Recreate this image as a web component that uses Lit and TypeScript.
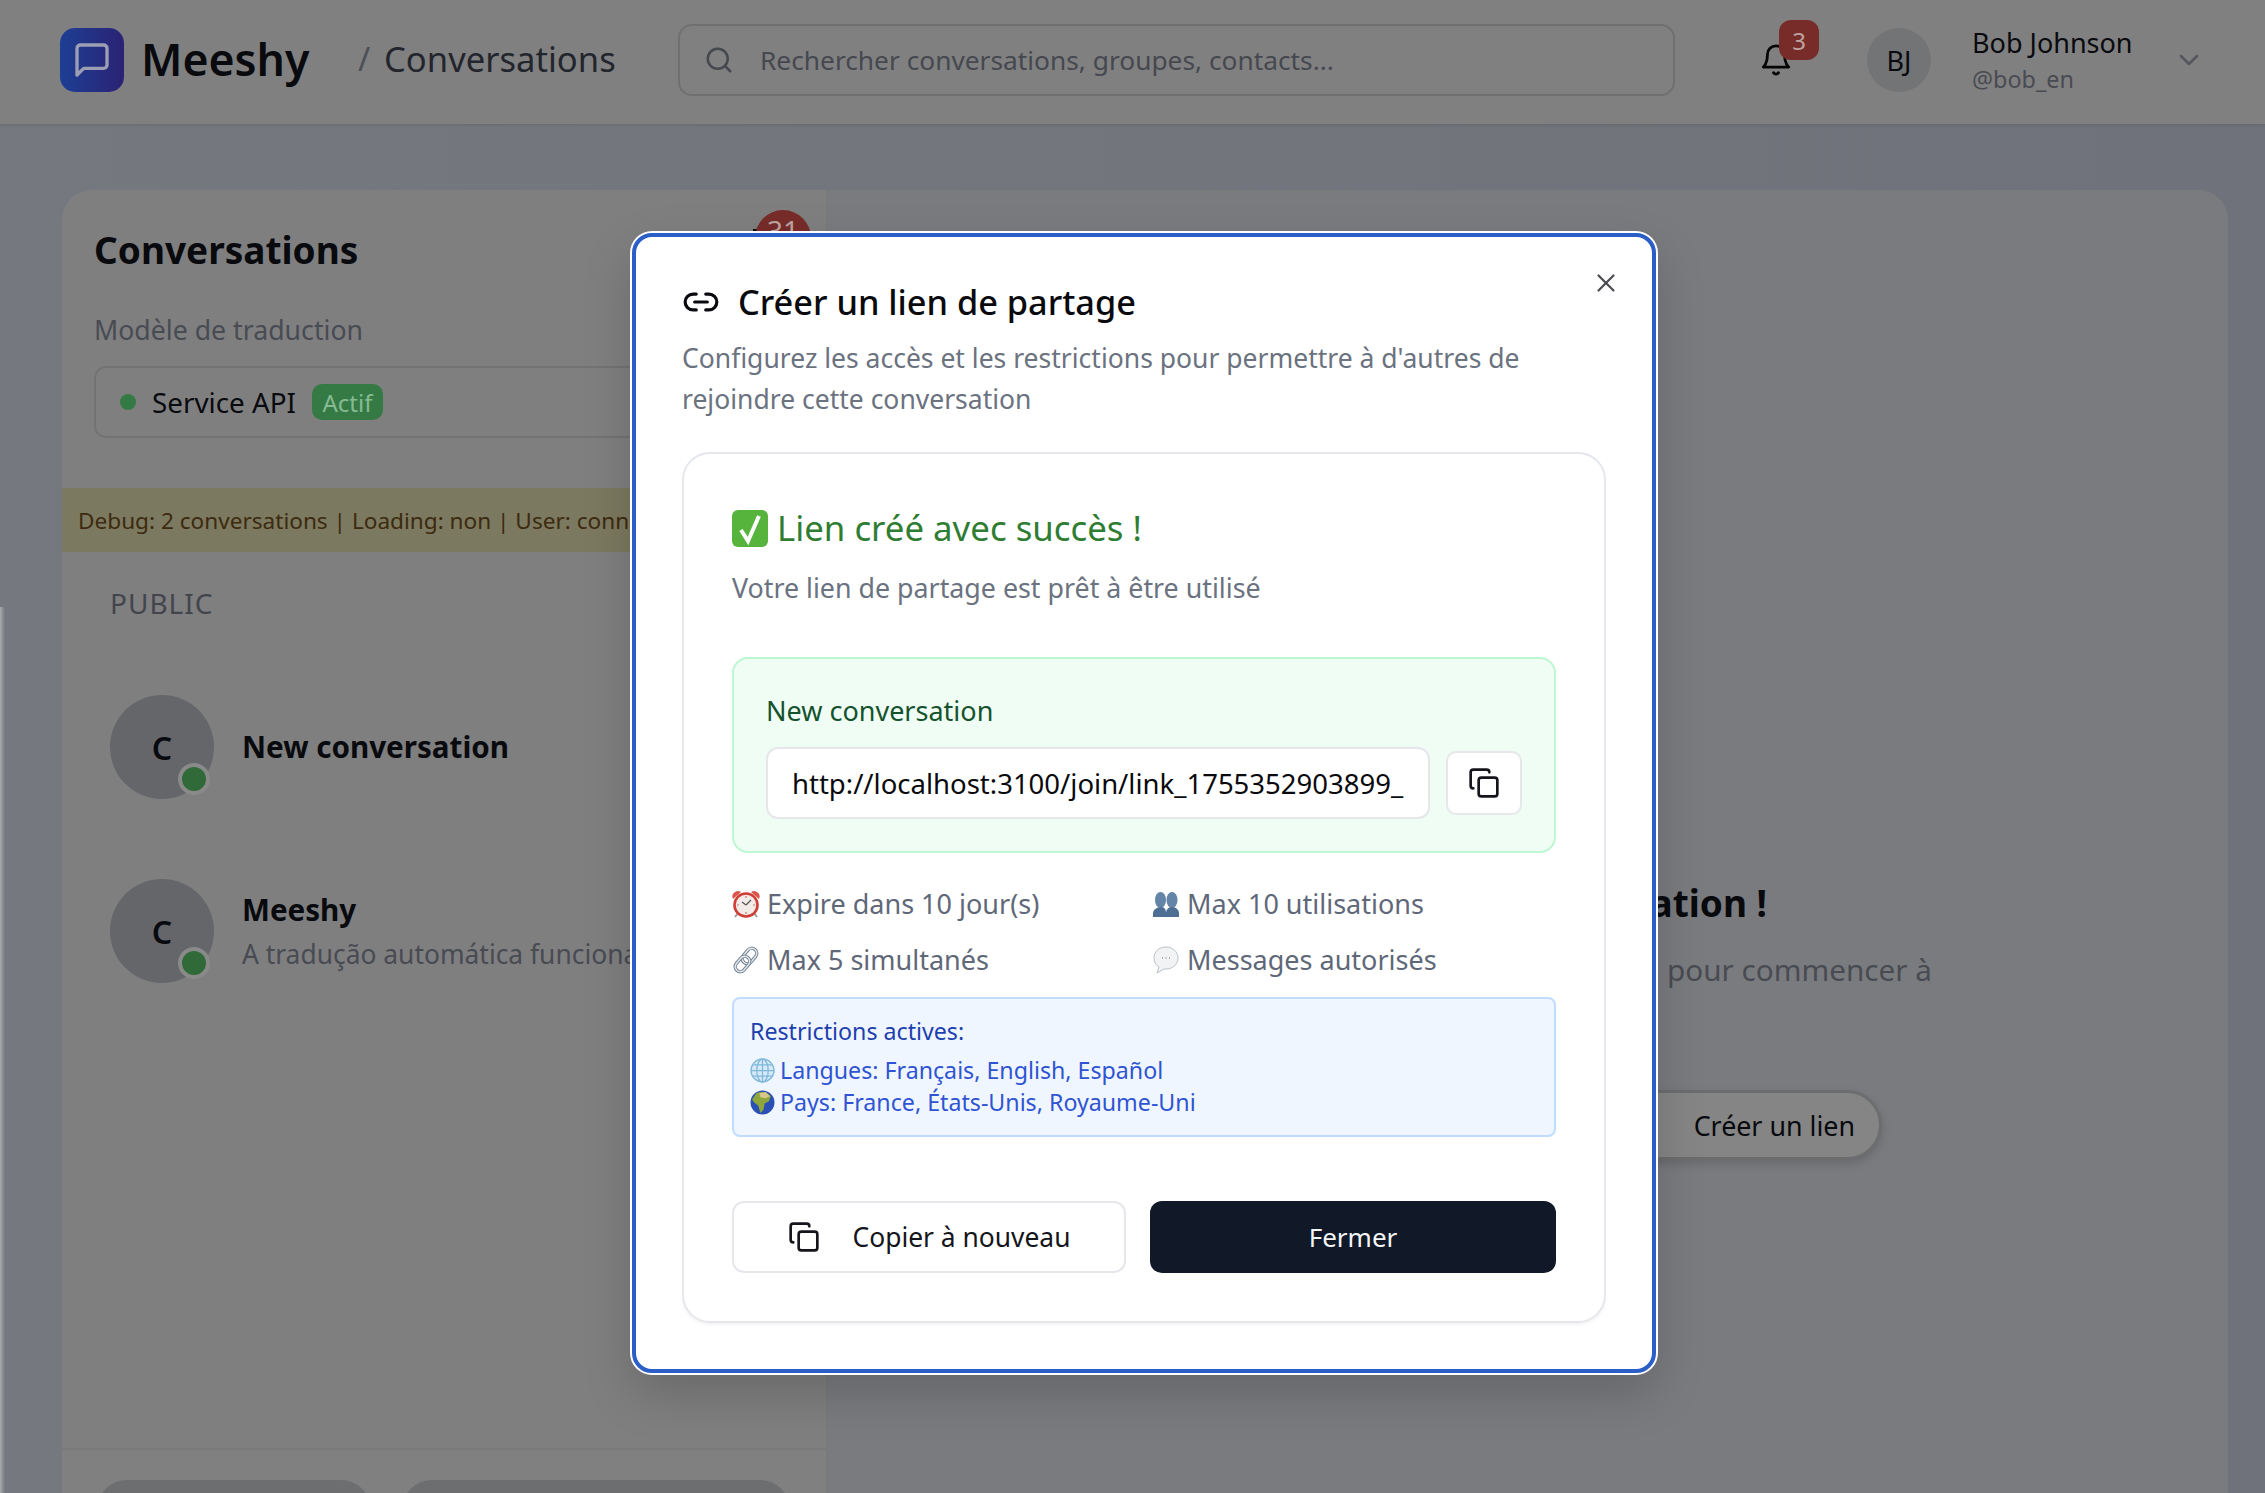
import { LitElement, css, html, svg } from "lit";
import { customElement } from "lit/decorators.js";

const icon = (size: number, body: unknown, stroke = "currentColor", width = 2) => html`
  <svg width=${size} height=${size} viewBox="0 0 24 24" fill="none" stroke=${stroke}
    stroke-width=${width} stroke-linecap="round" stroke-linejoin="round">${body}</svg>
`;

const copyIcon = (size: number) =>
  icon(size, svg`<rect x="8" y="8" width="14" height="14" rx="2"></rect>
    <path d="M4 16c-1.1 0-2-.9-2-2V4c0-1.1.9-2 2-2h10c1.1 0 2 .9 2 2"></path>`);

// the reference uses colour emoji, no emoji font here so they are small drawings
const emojiCheck = html`<svg class="emoji-big" viewBox="0 0 36 37">
  <rect x="0" y="0" width="36" height="37" rx="6" fill="#56b33c"></rect>
  <path d="M9 20l7 11L27 6" fill="none" stroke="#fff" stroke-width="4"></path>
</svg>`;
const emojiClock = html`<svg class="emoji" viewBox="0 0 28 28">
  <path d="M1 9a5.500 5.500 0 0 1 8-7zM27 9a5.500 5.500 0 0 0-8-7z" fill="#d9534a"></path>
  <path d="M6 23l-3 4M22 23l3 4" stroke="#9a9a9a" stroke-width="2"></path>
  <circle cx="14" cy="15" r="11.500" fill="#f3ebe8" stroke="#cf3f36" stroke-width="2.600"></circle>
  <path d="M14 15l-4-3M14 15l5-5" fill="none" stroke="#555" stroke-width="1.200"></path>
  <path d="M14 6v2M14 22v2M5 15h2M21 15h2" stroke="#c9786f" stroke-width="1.200"></path>
</svg>`;
const emojiBusts = html`<svg class="emoji" viewBox="0 0 28 28">
  <ellipse cx="8.500" cy="10" rx="5.500" ry="8" fill="#6484a8"></ellipse>
  <path d="M1 27v-4c0-3 4-6 8-6s5 3 5 6v4z" fill="#4f6e94"></path>
  <ellipse cx="20" cy="10" rx="5.500" ry="8" fill="#6484a8"></ellipse>
  <path d="M14 27v-4c0-3 2-6 6-6s7 3 7 6v4z" fill="#4f6e94"></path>
</svg>`;
const emojiLink = html`<svg class="emoji" viewBox="0 0 28 28">
  <g fill="none">
    <rect x="12.500" y="1.500" width="10" height="17" rx="5" transform="rotate(40 17.500 10)" stroke="#6f7d8a" stroke-width="3.400"></rect>
    <rect x="12.500" y="1.500" width="10" height="17" rx="5" transform="rotate(40 17.500 10)" stroke="#dfe6ec" stroke-width="1.600"></rect>
    <rect x="5.500" y="9.500" width="10" height="17" rx="5" transform="rotate(40 10.500 18)" stroke="#6f7d8a" stroke-width="3.400"></rect>
    <rect x="5.500" y="9.500" width="10" height="17" rx="5" transform="rotate(40 10.500 18)" stroke="#dfe6ec" stroke-width="1.600"></rect>
  </g>
</svg>`;
const emojiBubble = html`<svg class="emoji" viewBox="0 0 28 28">
  <path d="M14 1C7 1 2 5.500 2 12c0 4 2 7 5 9l-2 6 7-4h2c7 0 12-5 12-11S21 1 14 1z" fill="#f1f3f4" stroke="#bcc2c7"></path>
  <path d="M10 12h.6M13.700 12h.6M17.400 12h.6" stroke="#5b6470" stroke-width="1.600"></path>
</svg>`;
const emojiGlobe = html`<svg class="emoji-small" viewBox="0 0 24 24">
  <circle cx="12" cy="12" r="11" fill="#d5e9f6" stroke="#7fb8da" stroke-width="1.400"></circle>
  <path d="M12 1v22M1 12h22M3 6.500h18M3 17.500h18" stroke="#7fb8da" stroke-width="1.200" fill="none"></path>
  <ellipse cx="12" cy="12" rx="5.500" ry="11" fill="none" stroke="#7fb8da" stroke-width="1.200"></ellipse>
</svg>`;
const emojiEarth = html`<svg class="emoji-small" viewBox="0 0 24 24">
  <circle cx="12" cy="12" r="11.500" fill="#2a4fb5"></circle>
  <path d="M6 3c5-2 11-1 14 3l-2 5-4 2-1 6-3 3-2-7-4-3-2-3z" fill="#8ea63c"></path>
  <path d="M9 3l6-1 4 4-4 2-5-1z" fill="#d8c78a"></path>
</svg>`;

@customElement("app-root")
export class AppRoot extends LitElement {
  static styles = css`
    :host {
      display: block;
      position: relative;
      width: 2265px;
      height: 1493px;
      overflow: hidden;
      background: linear-gradient(90deg, #75787f, #70727b);
      font-family: "Noto Sans", "Open Sans", sans-serif;
      color: #090a0e;
    }
    * { box-sizing: border-box; }
    svg { display: block; flex: none; }

    .edge {
      position: absolute;
      left: 0;
      top: 607px;
      bottom: 0;
      width: 5px;
      background: linear-gradient(90deg, #a9aaac, #75787f);
    }

    .header {
      height: 124px;
      background: #808080;
      display: flex;
      align-items: center;
      padding: 0 46px 4px 60px;
      box-shadow: 0 1px 3px rgba(0, 0, 0, 0.12);
    }
    .logo {
      width: 64px;
      height: 64px;
      border-radius: 15px;
      background: linear-gradient(90deg, #1d3f94, #2b2274);
      color: #9c9fb4;
      display: flex;
      align-items: center;
      justify-content: center;
    }
    .brand { margin: 0 0 3px 17px; font-size: 44.6px; font-weight: 600; width: 217px; white-space: nowrap; }
    .slash { color: #4d4f57; font-size: 33px; width: 26px; margin-bottom: 3px; }
    .crumb { color: #23252d; font-size: 34.6px; width: 294px; white-space: nowrap; margin-bottom: 3px; }
    .search {
      width: 997px;
      height: 72px;
      border: 2px solid #6f7072;
      border-radius: 14px;
      display: flex;
      align-items: center;
      padding-left: 24px;
      gap: 26px;
      color: #46484f;
      font-size: 26.3px;
      white-space: nowrap;
    }
    .bell { position: relative; margin-left: 84px; width: 40px; color: #050505; }
    .bell-badge {
      position: absolute;
      left: 20px;
      top: -23px;
      width: 40px;
      height: 40px;
      border-radius: 12px;
      background: #772c29;
      color: #bda3a0;
      font-size: 24px;
      display: flex;
      align-items: center;
      justify-content: center;
    }
    .avatar-small {
      margin-left: 68px;
      width: 64px;
      height: 64px;
      border-radius: 50%;
      background: #737476;
      display: flex;
      align-items: center;
      justify-content: center;
      font-size: 27px;
    }
    .user { margin: 2px 0 0 41px; width: 201px; }
    .user-name { font-size: 27px; line-height: 36px; white-space: nowrap; }
    .user-handle { font-size: 23.4px; line-height: 36px; color: #494b52; }
    .chevron { color: #55575d; }

    .main { display: flex; padding: 66px 37px 0 62px; height: 1369px; }
    .panel {
      flex: 1;
      display: flex;
      background: #7f7f80;
      border-radius: 30px 30px 0 0;
      overflow: hidden;
    }
    .left {
      width: 766px;
      flex: none;
      border-right: 2px solid #797a7b;
      display: flex;
      flex-direction: column;
    }
    .left-top { padding: 32px 32px 0; position: relative; height: 298px; }
    .left-title { font-size: 37px; font-weight: 700; line-height: 56px; white-space: nowrap; }
    .unread {
      position: absolute;
      left: 693px;
      top: 20px;
      width: 56px;
      height: 56px;
      border-radius: 50%;
      background: #772c29;
      color: #bda3a0;
      font-size: 28px;
      text-align: center;
      line-height: 40px;
    }
    .unread-tick { position: absolute; left: 691px; top: 39px; width: 20px; height: 2px; background: #0a0a0a; }
    .model-label { margin-top: 32px; font-size: 26.7px; line-height: 40px; color: #494b52; }
    .model {
      margin-top: 16px;
      height: 72px;
      border: 2px solid #727375;
      border-radius: 12px;
      display: flex;
      align-items: center;
      padding-left: 24px;
      font-size: 27.800px;
    }
    .dot { width: 16px; height: 16px; border-radius: 50%; background: #347a45; margin-right: 16px; }
    .active {
      margin-left: 16px;
      width: 71px;
      height: 36px;
      border-radius: 10px;
      background: #357a44;
      color: #86ba93;
      font-size: 24px;
      display: flex;
      align-items: center;
      justify-content: center;
    }
    .debug {
      height: 64px;
      background: #7b795f;
      color: #3d2a10;
      font-size: 22.6px;
      padding-left: 16px;
      display: flex;
      align-items: center;
      white-space: nowrap;
    }
    .group { padding: 31px 48px 0; font-size: 28px; line-height: 40px; color: #43454d; letter-spacing: 1px; }
    .rows { padding: 72px 48px 0; display: flex; flex-direction: column; gap: 80px; flex: 1; }
    .row { display: flex; align-items: center; gap: 28px; height: 104px; white-space: nowrap; }
    .avatar {
      position: relative;
      width: 104px;
      height: 104px;
      border-radius: 50%;
      background: #65666a;
      display: flex;
      align-items: center;
      justify-content: center;
      font-size: 32px;
      font-weight: 600;
      flex: none;
    }
    .status {
      position: absolute;
      right: 4px;
      bottom: 4px;
      width: 32px;
      height: 32px;
      border-radius: 50%;
      background: #2f6a38;
      border: 4px solid #8a8a8a;
    }
    .row-title { font-size: 29.6px; font-weight: 700; line-height: 44px; }
    .row-sub { margin-top: 2px; font-size: 26.4px; line-height: 40px; color: #494b52; }
    .left-bottom {
      height: 45px;
      background: #808080;
      border-top: 2px solid #797a7b;
      padding: 30px 35px 0;
      display: flex;
      gap: 31px;
    }
    .pill { height: 60px; border-radius: 30px; background: #6d6e70; flex: none; }

    .right { flex: 1; position: relative; background: #7a7b7f; }
    .welcome {
      position: absolute;
      right: 461px;
      top: 683px;
      font-size: 37px;
      font-weight: 700;
      line-height: 60px;
      white-space: nowrap;
    }
    .welcome-sub {
      position: absolute;
      right: 296px;
      top: 758px;
      font-size: 29.7px;
      line-height: 44px;
      color: #494b52;
      white-space: nowrap;
    }
    .create-link {
      position: absolute;
      right: 346px;
      top: 900px;
      width: 500px;
      height: 70px;
      border-radius: 35px;
      background: #858585;
      border: 3px solid #6c6d6f;
      box-shadow: 0 4px 10px rgba(0, 0, 0, 0.15);
      display: flex;
      align-items: center;
      justify-content: flex-end;
      padding-right: 24px;
      font-size: 26.8px;
      white-space: nowrap;
    }

    .modal {
      position: absolute;
      left: 632px;
      top: 233px;
      width: 1024px;
      height: 1140px;
      background: #fff;
      border: 4px solid #2b5fc7;
      border-radius: 20px;
      box-shadow: 0 0 0 2px #fff, 0 20px 50px rgba(0, 0, 0, 0.18);
      padding: 39px 46px 0;
    }
    .close { position: absolute; right: 31px; top: 31px; color: #4b4d53; }
    .modal-title {
      display: flex;
      align-items: center;
      gap: 18px;
      font-size: 34.3px;
      line-height: 51px;
      font-weight: 500;
      white-space: nowrap;
    }
    .modal-desc { margin-top: 11px; font-size: 26.5px; line-height: 40.500px; color: #6b7280; width: 900px; }
    .card {
      margin-top: 33px;
      height: 871px;
      border: 2px solid #e5e7eb;
      border-radius: 28px;
      padding: 48px 48px 0;
      box-shadow: 0 2px 3px rgba(0, 0, 0, 0.05);
    }
    .success {
      display: flex;
      align-items: center;
      gap: 9px;
      font-size: 34.8px;
      line-height: 52px;
      color: #2e7d32;
      white-space: nowrap;
    }
    .emoji-big { width: 36px; height: 37px; }
    .success-sub { margin-top: 12px; font-size: 26.8px; line-height: 44px; color: #6b7280; }
    .green {
      margin-top: 47px;
      height: 196px;
      background: #f0fdf4;
      border: 2px solid #bbf7d0;
      border-radius: 16px;
      padding: 32px 32px 0;
    }
    .green-label { font-size: 27px; line-height: 40px; color: #14532d; }
    .url-row { display: flex; align-items: center; gap: 16px; margin-top: 16px; }
    .url {
      width: 664px;
      height: 72px;
      background: #fff;
      border: 2px solid #e5e7eb;
      border-radius: 12px;
      padding: 0 24px;
      display: flex;
      align-items: center;
      font-size: 27.5px;
      white-space: nowrap;
      overflow: hidden;
    }
    .url-copy {
      width: 76px;
      height: 64px;
      background: #fff;
      border: 2px solid #e5e7eb;
      border-radius: 10px;
      display: flex;
      align-items: center;
      justify-content: center;
      color: #14161c;
    }
    .info {
      margin-top: 31px;
      display: grid;
      grid-template-columns: 420px 1fr;
      row-gap: 16px;
      color: #5f6878;
      font-size: 27px;
      line-height: 40px;
    }
    .info-item { display: flex; align-items: center; gap: 7px; white-space: nowrap; }
    .emoji { width: 28px; height: 28px; }
    .blue {
      margin-top: 17px;
      height: 140px;
      background: #eff6ff;
      border: 2px solid #bfdbfe;
      border-radius: 8px;
      padding: 16px 16px 0;
      font-size: 23.2px;
      color: #2f54d3;
    }
    .blue-title { color: #1e40af; font-size: 23.2px; line-height: 32px; margin-bottom: 7px; }
    .blue-line { display: flex; align-items: center; gap: 5px; line-height: 32px; white-space: nowrap; }
    .emoji-small { width: 25px; height: 25px; }
    .actions { display: flex; gap: 24px; margin-top: 64px; }
    .btn {
      height: 72px;
      border-radius: 12px;
      display: flex;
      align-items: center;
      justify-content: center;
      font-size: 26.4px;
      white-space: nowrap;
    }
    .btn-outline { width: 394px; background: #fff; border: 2px solid #e5e7eb; gap: 33px; color: #14161c; }
    .btn-dark { width: 406px; background: #111827; color: #f4f5f7; font-size: 26px; }
  `;

  render() {
    return html`
      <div class="header">
        <div class="logo">
          ${icon(40, svg`<path d="M21 15a2 2 0 0 1-2 2H7l-4 4V5a2 2 0 0 1 2-2h14a2 2 0 0 1 2 2z"></path>`)}
        </div>
        <div class="brand">Meeshy</div>
        <div class="slash">/</div>
        <div class="crumb">Conversations</div>
        <div class="search">
          ${icon(30, svg`<circle cx="11" cy="11" r="8"></circle><path d="m21 21-4.300-4.300"></path>`)}
          <span>Rechercher conversations, groupes, contacts...</span>
        </div>
        <div class="bell">
          ${icon(34, svg`<path d="M6 8a6 6 0 0 1 12 0c0 7 3 9 3 9H3s3-2 3-9"></path><path d="M10.300 21a1.940 1.940 0 0 0 3.400 0"></path>`)}
          <div class="bell-badge">3</div>
        </div>
        <div class="avatar-small">BJ</div>
        <div class="user">
          <div class="user-name">Bob Johnson</div>
          <div class="user-handle">@bob_en</div>
        </div>
        <div class="chevron">${icon(32, svg`<path d="m6 9 6 6 6-6"></path>`)}</div>
      </div>

      <div class="main">
        <div class="panel">
          <div class="left">
            <div class="left-top">
              <div class="left-title">Conversations</div>
              <div class="unread-tick"></div>
              <div class="unread">31</div>
              <div class="model-label">Modèle de traduction</div>
              <div class="model">
                <span class="dot"></span>
                <span>Service API</span>
                <span class="active">Actif</span>
              </div>
            </div>
            <div class="debug">Debug: 2 conversations | Loading: non | User: connecté</div>
            <div class="group">PUBLIC</div>
            <div class="rows">
              <div class="row">
                <div class="avatar">C<span class="status"></span></div>
                <div><div class="row-title">New conversation</div></div>
              </div>
              <div class="row">
                <div class="avatar">C<span class="status"></span></div>
                <div>
                  <div class="row-title">Meeshy</div>
                  <div class="row-sub">A tradução automática funciona</div>
                </div>
              </div>
            </div>
            <div class="left-bottom">
              <div class="pill" style="width: 274px"></div>
              <div class="pill" style="width: 388px"></div>
            </div>
          </div>
          <div class="right">
            <div class="welcome">conversation !</div>
            <div class="welcome-sub">pour commencer à</div>
            <div class="create-link">Créer un lien</div>
          </div>
        </div>
      </div>
      <div class="edge"></div>

      <div class="modal">
        <div class="close">${icon(30, svg`<path d="M18 6 6 18"></path><path d="m6 6 12 12"></path>`, "currentColor", 1.8)}</div>
        <div class="modal-title">
          ${icon(38, svg`<path d="M9 17H7A5 5 0 0 1 7 7h2"></path><path d="M15 7h2a5 5 0 1 1 0 10h-2"></path><path d="M8 12h8"></path>`)}
          <span>Créer un lien de partage</span>
        </div>
        <div class="modal-desc">
          Configurez les accès et les restrictions pour permettre à d'autres de rejoindre cette conversation
        </div>
        <div class="card">
          <div class="success">${emojiCheck}<span>Lien créé avec succès !</span></div>
          <div class="success-sub">Votre lien de partage est prêt à être utilisé</div>
          <div class="green">
            <div class="green-label">New conversation</div>
            <div class="url-row">
              <div class="url">http://localhost:3100/join/link_1755352903899_</div>
              <div class="url-copy">${copyIcon(32)}</div>
            </div>
          </div>
          <div class="info">
            <div class="info-item">${emojiClock}<span>Expire dans 10 jour(s)</span></div>
            <div class="info-item">${emojiBusts}<span>Max 10 utilisations</span></div>
            <div class="info-item">${emojiLink}<span>Max 5 simultanés</span></div>
            <div class="info-item">${emojiBubble}<span>Messages autorisés</span></div>
          </div>
          <div class="blue">
            <div class="blue-title">Restrictions actives:</div>
            <div class="blue-line">${emojiGlobe}<span>Langues: Français, English, Español</span></div>
            <div class="blue-line">${emojiEarth}<span>Pays: France, États-Unis, Royaume-Uni</span></div>
          </div>
          <div class="actions">
            <div class="btn btn-outline">${copyIcon(32)}<span>Copier à nouveau</span></div>
            <div class="btn btn-dark">Fermer</div>
          </div>
        </div>
      </div>
    `;
  }
}
